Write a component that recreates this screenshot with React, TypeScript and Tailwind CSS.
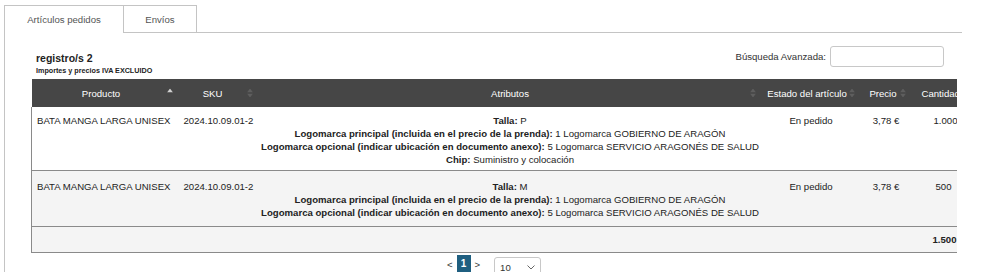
import React from "react";

const SortIcon = ({ active }: { active?: boolean }) => (
  <span className="absolute right-[6px] top-1/2 -translate-y-1/2 flex flex-col items-center gap-[1px]">
    <svg width="6" height="4" viewBox="0 0 6 4">
      <path d="M3 0 L6 4 L0 4 Z" fill={active ? "#d0d0d0" : "#5e5e5e"} />
    </svg>
    <svg width="6" height="4" viewBox="0 0 6 4">
      <path d="M0 0 L6 0 L3 4 Z" fill={active ? "#464646" : "#5e5e5e"} />
    </svg>
  </span>
);

const Attr = ({ k, v }: { k: string; v: string }) => (
  <div>
    <span className="font-bold">{k}:</span> {v}
  </div>
);

export default function App() {
  return (
    <div
      className="w-[1000px] h-[272px] overflow-hidden bg-white text-[#222] text-[9.6px] leading-[13px]"
      style={{ fontFamily: '"Liberation Sans", Arial, sans-serif' }}
    >
      {/* tabs */}
      <div className="flex pt-[5px] pl-[4px] pr-[38px]">
        <div className="w-[119px] h-[28px] border-l border-t border-[#c4c4c4] flex items-center justify-center text-[#555]">
          Artículos pedidos
        </div>
        <div className="w-[74px] h-[28px] border border-[#c4c4c4] flex items-center justify-center text-[#555]">
          Envíos
        </div>
        <div className="flex-1 border-b border-[#c4c4c4]" />
      </div>
      {/* panel */}
      <div className="ml-[4px] border-l border-[#c4c4c4] h-[240px] pl-[26px] pr-[43px]">
        <div className="flex justify-between items-start pt-[13px] pr-[13px]">
          <div className="pl-[5px] pt-[6px]">
            <div className="font-bold text-[10.5px] leading-[13px]">registro/s 2</div>
            <div className="font-bold text-[7.2px] leading-[9px] mt-[1px]">Importes y precios IVA EXCLUIDO</div>
          </div>
          <div className="flex items-center gap-[4px]">
            <span className="text-[#333]">Búsqueda Avanzada:</span>
            <div className="w-[114px] h-[21px] border border-[#c8c8c8] rounded-[3px] bg-white" />
          </div>
        </div>
        <div className="mt-[4px] w-[926px] overflow-hidden">
          <table className="table-fixed border-collapse w-[940px]">
            <colgroup>
              <col className="w-[147px]" />
              <col className="w-[80px]" />
              <col className="w-[503px]" />
              <col className="w-[99px]" />
              <col className="w-[51px]" />
              <col className="w-[60px]" />
            </colgroup>
            <thead>
              <tr className="bg-[#464646] text-white h-[28px]">
                <th className="relative font-normal text-center pr-[8px]">Producto<SortIcon active /></th>
                <th className="relative font-normal text-center pr-[12px]">SKU<SortIcon /></th>
                <th className="relative font-normal text-center">Atributos<SortIcon /></th>
                <th className="relative font-normal text-center pr-[8px]">Estado del artículo<SortIcon /></th>
                <th className="relative font-normal text-center pr-[6px]">Precio<SortIcon /></th>
                <th className="relative font-normal text-left pl-[10px] whitespace-nowrap">Cantidad<SortIcon /></th>
              </tr>
            </thead>
            <tbody>
              <tr className="align-top border-l border-b border-[#8a8a8a] bg-white">
                <td className="pl-[5px] pt-[7px] pb-[4px] whitespace-nowrap">BATA MANGA LARGA UNISEX</td>
                <td className="pl-[5px] pt-[7px] whitespace-nowrap">2024.10.09.01-2</td>
                <td className="text-center pt-[7px] pb-[4px] whitespace-nowrap">
                  <Attr k="Talla" v="P" />
                  <Attr k="Logomarca principal (incluida en el precio de la prenda)" v="1 Logomarca GOBIERNO DE ARAGÓN" />
                  <Attr k="Logomarca opcional (indicar ubicación en documento anexo)" v="5 Logomarca SERVICIO ARAGONÉS DE SALUD" />
                  <Attr k="Chip" v="Suministro y colocación" />
                </td>
                <td className="text-center pt-[7px]">En pedido</td>
                <td className="text-center pt-[7px]">3,78 €</td>
                <td className="text-left pl-[22px] pt-[7px]">1.000</td>
              </tr>
              <tr className="align-top border-l border-b border-[#8a8a8a] bg-[#f4f4f4]">
                <td className="pl-[5px] pt-[9px] pb-[7px] whitespace-nowrap">BATA MANGA LARGA UNISEX</td>
                <td className="pl-[5px] pt-[9px] whitespace-nowrap">2024.10.09.01-2</td>
                <td className="text-center pt-[9px] pb-[7px] whitespace-nowrap">
                  <Attr k="Talla" v="M" />
                  <Attr k="Logomarca principal (incluida en el precio de la prenda)" v="1 Logomarca GOBIERNO DE ARAGÓN" />
                  <Attr k="Logomarca opcional (indicar ubicación en documento anexo)" v="5 Logomarca SERVICIO ARAGONÉS DE SALUD" />
                </td>
                <td className="text-center pt-[9px]">En pedido</td>
                <td className="text-center pt-[9px]">3,78 €</td>
                <td className="text-left pl-[24px] pt-[9px]">500</td>
              </tr>
              <tr className="h-[26px] border-l border-b border-[#8a8a8a] bg-[#f4f4f4]">
                <td colSpan={5} />
                <td className="text-left pl-[21px] font-bold">1.500</td>
              </tr>
            </tbody>
          </table>
        </div>
        {/* pagination */}
        <div className="flex items-start justify-center mt-[2px] gap-[4px]">
          <span className="mt-[3px] text-[#333]">&lt;</span>
          <span className="w-[14px] h-[17px] bg-[#1f5f80] text-white font-bold text-[10px] flex items-center justify-center">1</span>
          <span className="mt-[3px] text-[#333]">&gt;</span>
          <div className="ml-[10px] mt-[2px] w-[47px] h-[20px] border border-[#c8c8c8] rounded-[3px] flex items-center justify-between px-[5px] text-[#333]">
            <span>10</span>
            <svg width="8" height="5" viewBox="0 0 8 5"><path d="M0.5 0.5 L4 4 L7.5 0.5" fill="none" stroke="#666" strokeWidth="1" /></svg>
          </div>
        </div>
      </div>
    </div>
  );
}
